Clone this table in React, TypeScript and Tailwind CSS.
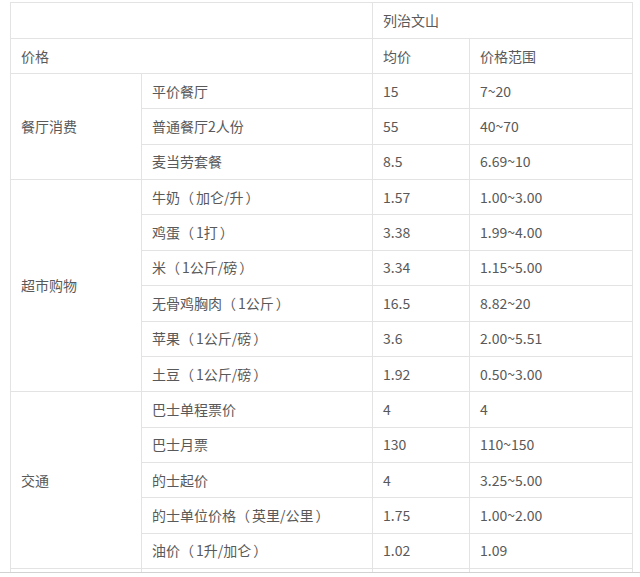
import React from 'react';

type Row = { item: string; avg: string; range: string };
type Group = { name: string; rows: Row[] };

const groups: Group[] = [
  {
    name: '餐厅消费',
    rows: [
      { item: '平价餐厅', avg: '15', range: '7~20' },
      { item: '普通餐厅2人份', avg: '55', range: '40~70' },
      { item: '麦当劳套餐', avg: '8.5', range: '6.69~10' },
    ],
  },
  {
    name: '超市购物',
    rows: [
      { item: '牛奶（加仑/升）', avg: '1.57', range: '1.00~3.00' },
      { item: '鸡蛋（1打）', avg: '3.38', range: '1.99~4.00' },
      { item: '米（1公斤/磅）', avg: '3.34', range: '1.15~5.00' },
      { item: '无骨鸡胸肉（1公斤）', avg: '16.5', range: '8.82~20' },
      { item: '苹果（1公斤/磅）', avg: '3.6', range: '2.00~5.51' },
      { item: '土豆（1公斤/磅）', avg: '1.92', range: '0.50~3.00' },
    ],
  },
  {
    name: '交通',
    rows: [
      { item: '巴士单程票价', avg: '4', range: '4' },
      { item: '巴士月票', avg: '130', range: '110~150' },
      { item: '的士起价', avg: '4', range: '3.25~5.00' },
      { item: '的士单位价格（英里/公里）', avg: '1.75', range: '1.00~2.00' },
      { item: '油价（1升/加仑）', avg: '1.02', range: '1.09' },
    ],
  },
  {
    name: '其他',
    rows: [{ item: '', avg: '', range: '' }],
  },
];

const cell = 'border border-[#e3e3e3] px-[10px] py-0 align-middle text-left font-normal';

// a little air inside the full-width parens, as in the source font
function Label({ text }: { text: string }) {
  const parts = text.split(/([（）])/);
  return (
    <>
      {parts.map((p, i) =>
        p === '（' ? (
          <span key={i} className="mr-[2px]">（</span>
        ) : p === '）' ? (
          <span key={i} className="ml-[2px]">）</span>
        ) : (
          <React.Fragment key={i}>{p}</React.Fragment>
        )
      )}
    </>
  );
}

export default function App() {
  return (
    <div
      className="w-[640px] h-[577px] bg-white text-[14px] text-[#595959]"
      style={{ fontFamily: '"Noto Sans CJK SC", "Noto Sans", sans-serif' }}
    >
      <div className="h-[573px] overflow-hidden border-b border-[#d2d2d2] pt-[2px] pl-[10px]">
        <table className="table-fixed border-collapse w-[622px]">
          <colgroup>
            <col className="w-[131px]" />
            <col className="w-[231px]" />
            <col className="w-[97px]" />
            <col className="w-[163px]" />
          </colgroup>
          <thead>
            <tr>
              <th colSpan={2} className={`${cell} h-[36px]`}></th>
              <th colSpan={2} className={`${cell} h-[36px]`}>列治文山</th>
            </tr>
            <tr>
              <th colSpan={2} className={`${cell} h-[35px]`}>价格</th>
              <th className={`${cell} h-[35px]`}>均价</th>
              <th className={`${cell} h-[35px]`}>价格范围</th>
            </tr>
          </thead>
          <tbody>
            {groups.map(g =>
              g.rows.map((r, i) => (
                <tr key={g.name + i}>
                  {i === 0 && (
                    <td rowSpan={g.rows.length} className={cell}>
                      {g.rows[0].item ? g.name : ''}
                    </td>
                  )}
                  <td className={`${cell} h-[35.36px] whitespace-nowrap`}>
                    <Label text={r.item} />
                  </td>
                  <td className={`${cell} h-[35.36px]`}>{r.avg}</td>
                  <td className={`${cell} h-[35.36px]`}>{r.range}</td>
                </tr>
              ))
            )}
          </tbody>
        </table>
      </div>
    </div>
  );
}
